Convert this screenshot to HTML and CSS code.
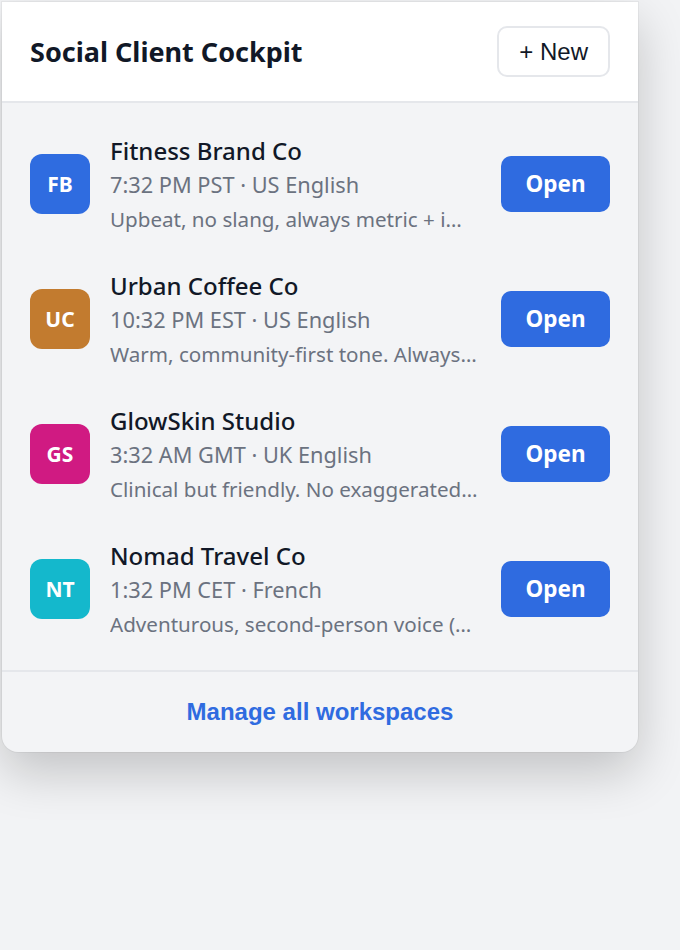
FILE: index.html
```html
<!DOCTYPE html>
<html lang="en">
<head>
<meta charset="utf-8">
<title>Social Client Cockpit</title>
<link rel="stylesheet" href="styles.css">
</head>
<body>
<div class="card">
  <header class="head">
    <h1 class="title">Social Client Cockpit</h1>
    <button class="btn-new">+ New</button>
  </header>
  <ul class="list">
    <li class="row">
      <div class="avatar av-fb">FB</div>
      <div class="info">
        <div class="name">Fitness Brand Co</div>
        <div class="meta">7:32 PM PST · US English</div>
        <div class="desc">Upbeat, no slang, always metric + imperial units side by side.</div>
      </div>
      <button class="btn-open">Open</button>
    </li>
    <li class="row">
      <div class="avatar av-uc">UC</div>
      <div class="info">
        <div class="name">Urban Coffee Co</div>
        <div class="meta">10:32 PM EST · US English</div>
        <div class="desc">Warm, community-first tone. Always credit local partners.</div>
      </div>
      <button class="btn-open">Open</button>
    </li>
    <li class="row">
      <div class="avatar av-gs">GS</div>
      <div class="info">
        <div class="name">GlowSkin Studio</div>
        <div class="meta">3:32 AM GMT · UK English</div>
        <div class="desc">Clinical but friendly. No exaggerated claims or before/after promises.</div>
      </div>
      <button class="btn-open">Open</button>
    </li>
    <li class="row">
      <div class="avatar av-nt">NT</div>
      <div class="info">
        <div class="name">Nomad Travel Co</div>
        <div class="meta">1:32 PM CET · French</div>
        <div class="desc">Adventurous, second-person voice (Wanderlust tone), short punchy sentences.</div>
      </div>
      <button class="btn-open">Open</button>
    </li>
  </ul>
  <footer class="foot">
    <button class="btn-manage">Manage all workspaces</button>
  </footer>
</div>
</body>
</html>
```

FILE: styles.css
```css
* { box-sizing: border-box; }
html, body { margin: 0; }
body {
  padding: 2px;
  background: #f2f3f5;
  font-family: "Noto Sans", "Open Sans", sans-serif;
  color: #111827;
  min-height: 950px;
}
.card {
  width: 636px;
  background: #f3f4f6;
  border-radius: 0 0 16px 16px;
  box-shadow: 0 0 0 1px rgba(0, 0, 0, 0.04), 0 20px 50px rgba(0, 0, 0, 0.2);
  overflow: hidden;
}
.head {
  display: flex;
  align-items: center;
  justify-content: space-between;
  background: #ffffff;
  padding: 24px 28px;
  border-bottom: 2px solid #e5e7eb;
}
.title {
  margin: 0;
  font-size: 27px;
  font-weight: 700;
  line-height: 34px;
}
.btn-new {
  font-family: "Liberation Sans", Arial, sans-serif;
  font-size: 24px;
  line-height: 27px;
  padding: 10px 20px;
  background: #ffffff;
  color: #111827;
  border: 2px solid #e5e7eb;
  border-radius: 10px;
}
.list {
  list-style: none;
  margin: 0;
  padding: 13px 0 14px;
}
.row {
  display: flex;
  align-items: center;
  padding: 18px 28px;
  gap: 20px;
}
.avatar {
  flex: 0 0 60px;
  width: 60px;
  height: 60px;
  border-radius: 12px;
  display: flex;
  align-items: center;
  justify-content: center;
  color: #ffffff;
  font-weight: 700;
  font-size: 21px;
}
.av-fb { background: #2f6ce0; }
.av-uc { background: #c27b2f; }
.av-gs { background: #d01a82; }
.av-nt { background: #14b8cc; }
.info {
  flex: 1 1 auto;
  min-width: 0;
}
.name {
  padding-top: 1px;
  font-size: 24px;
  font-weight: 500;
  line-height: 32px;
  color: #111827;
}
.meta {
  margin-top: 3px;
  font-size: 21.75px;
  line-height: 30px;
  color: #6b7280;
}
.desc {
  margin-top: 6px;
  font-size: 20.6px;
  line-height: 27px;
  color: #6b7280;
  white-space: nowrap;
  overflow: hidden;
  text-overflow: ellipsis;
}
.btn-open {
  flex: 0 0 auto;
  width: 109px;
  height: 56px;
  font-family: "Noto Sans", "Open Sans", sans-serif;
  font-weight: 700;
  font-size: 22.5px;
  line-height: 28px;
  padding: 0;
  background: #2f6be0;
  color: #ffffff;
  border: 0;
  border-radius: 10px;
}
.foot {
  border-top: 2px solid #e5e7eb;
  display: flex;
  justify-content: center;
  padding: 26px 0 27px;
}
.btn-manage {
  font-family: "Liberation Sans", Arial, sans-serif;
  font-weight: 700;
  font-size: 24px;
  line-height: 27px;
  padding: 0;
  background: none;
  border: 0;
  color: #2f6be0;
}
```
